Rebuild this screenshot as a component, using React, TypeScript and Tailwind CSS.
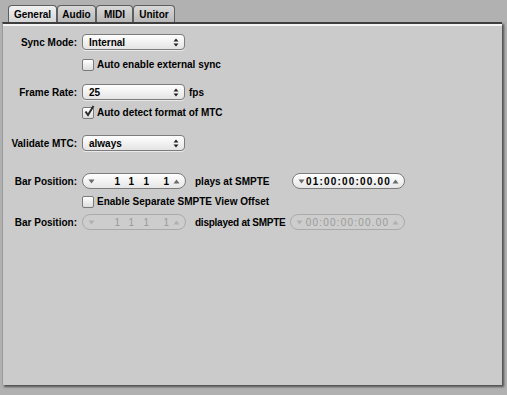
import React from 'react';

const tabs = ['General', 'Audio', 'MIDI', 'Unitor'];

function Arrows() {
  return (
    <svg width="6" height="9" viewBox="0 0 6 9" className="shrink-0">
      <path d="M3 0.5 L5.5 3.5 H0.5 Z" fill="#222" />
      <path d="M3 8.5 L5.5 5.5 H0.5 Z" fill="#222" />
    </svg>
  );
}

function Popup({ value }: { value: string }) {
  return (
    <div className="shrink-0 w-[103px] h-[16px] rounded-[4px] border border-[#7c7c7c] bg-gradient-to-b from-white to-[#e4e4e4] flex items-center justify-between pl-[6px] pr-[5px] shadow-[0_1px_0_rgba(255,255,255,0.6)]">
      <span>{value}</span>
      <Arrows />
    </div>
  );
}

function Tri({ up, color }: { up?: boolean; color: string }) {
  return (
    <svg width="7" height="5" viewBox="0 0 7 5" className="shrink-0">
      <path d={up ? 'M3.5 0.5 L6.5 4.5 H0.5 Z' : 'M3.5 4.5 L6.5 0.5 H0.5 Z'} fill={color} />
    </svg>
  );
}

function Stepper({ disabled }: { disabled?: boolean }) {
  const c = disabled ? '#b0b0b0' : '#6a6a6a';
  return (
    <div
      className={`shrink-0 w-[104px] h-[16px] rounded-full border flex items-center pl-[5px] pr-[5px] ${
        disabled ? 'border-[#aaaaaa] bg-[#cdcdcd] text-[#9a9a9a] font-normal' : 'border-[#7c7c7c] bg-gradient-to-b from-white to-[#e6e6e6] text-black'
      }`}
    >
      <Tri color={c} />
      <span className="w-[25px] text-right">1</span>
      <span className="w-[14px] text-right">1</span>
      <span className="w-[15px] text-right">1</span>
      <span className="w-[20px] text-right">1</span>
      <span className="flex-1" />
      <Tri up color={c} />
    </div>
  );
}

function Smpte({ value, disabled }: { value: string; disabled?: boolean }) {
  const c = disabled ? '#b0b0b0' : '#6a6a6a';
  return (
    <div
      className={`shrink-0 h-[16px] rounded-full border flex items-center justify-between px-[5px] ${
        disabled
          ? 'w-[115px] border-[#aaaaaa] bg-[#cdcdcd] text-[#9a9a9a] font-normal'
          : 'w-[113px] border-[#7c7c7c] bg-gradient-to-b from-white to-[#e6e6e6] text-black'
      }`}
    >
      <Tri color={c} />
      <span className="tracking-[1.2px] whitespace-nowrap">{value}</span>
      <Tri up color={c} />
    </div>
  );
}

function Check({ checked, label }: { checked?: boolean; label: string }) {
  return (
    <div className="flex items-center h-[13px] pl-[79px]">
      <div className="shrink-0 relative w-[12px] h-[12px] rounded-[2px] border border-[#7a7a7a] bg-gradient-to-b from-white to-[#dcdcdc]">
        {checked && (
          <svg width="12" height="13" viewBox="0 0 12 13" className="absolute left-[0px] top-[-3px]">
            <path d="M2.5 6.5 L5 10 L10.5 1" stroke="#2a2a2a" strokeWidth="2" fill="none" />
          </svg>
        )}
      </div>
      <span className="ml-[3px] whitespace-nowrap">{label}</span>
    </div>
  );
}

function Label({ text }: { text: string }) {
  return <span className="w-[79px] text-right pr-[5px] shrink-0 whitespace-nowrap">{text}</span>;
}

export default function App() {
  return (
    <div className="w-[507px] h-[395px] bg-[#b1b1b1] font-['Liberation_Sans',Arial,sans-serif] text-[10px] font-bold text-black overflow-hidden">
      {/* Tabs */}
      <div className="flex pl-[8px] pt-[5px] h-[22px]">
        {tabs.map((t, i) => (
          <div
            key={t}
            className={`h-[17px] flex items-center justify-center rounded-t-[4px] border border-b-0 border-[#5e5e5e] ${
              i === 0
                ? 'w-[49px] bg-gradient-to-b from-[#f2f2f2] to-[#d6d6d6]'
                : 'bg-gradient-to-b from-[#d9d9d9] to-[#b9b9b9]'
            } ${i === 1 ? 'w-[39px]' : ''} ${i === 2 ? 'w-[37px]' : ''} ${i === 3 ? 'w-[42px]' : ''}`}
          >
            {t}
          </div>
        ))}
      </div>
      {/* Panel */}
      <div className="ml-[2px] w-[500px] h-[363px] bg-[#cbcbcb] border-t-2 border-[#3e3e3e] border-l border-l-[#9a9a9a] shadow-[2px_2px_2px_rgba(0,0,0,0.55)]">
        <div className="border-t-2 border-[#f4f4f4] h-full pt-[8px] flex flex-col">
          <div className="flex items-center h-[16px]">
            <Label text="Sync Mode:" />
            <Popup value="Internal" />
          </div>
          <div className="mt-[8px]">
            <Check label="Auto enable external sync" />
          </div>
          <div className="flex items-center h-[16px] mt-[13px]">
            <Label text="Frame Rate:" />
            <Popup value="25" />
            <span className="ml-[4px]">fps</span>
          </div>
          <div className="mt-[6px]">
            <Check checked label="Auto detect format of MTC" />
          </div>
          <div className="flex items-center h-[16px] mt-[16px]">
            <Label text="Validate MTC:" />
            <Popup value="always" />
          </div>
          <div className="flex items-center h-[16px] mt-[22px]">
            <Label text="Bar Position:" />
            <Stepper />
            <span className="ml-[9px] w-[97px] shrink-0 whitespace-nowrap">plays at SMPTE</span>
            <Smpte value="01:00:00:00.00" />
          </div>
          <div className="mt-[6px]">
            <Check label="Enable Separate SMPTE View Offset" />
          </div>
          <div className="flex items-center h-[16px] mt-[6px]">
            <Label text="Bar Position:" />
            <Stepper disabled />
            <span className="ml-[9px] w-[95px] shrink-0 whitespace-nowrap tracking-[-0.25px]">displayed at SMPTE</span>
            <Smpte disabled value="00:00:00:00.00" />
          </div>
        </div>
      </div>
    </div>
  );
}
